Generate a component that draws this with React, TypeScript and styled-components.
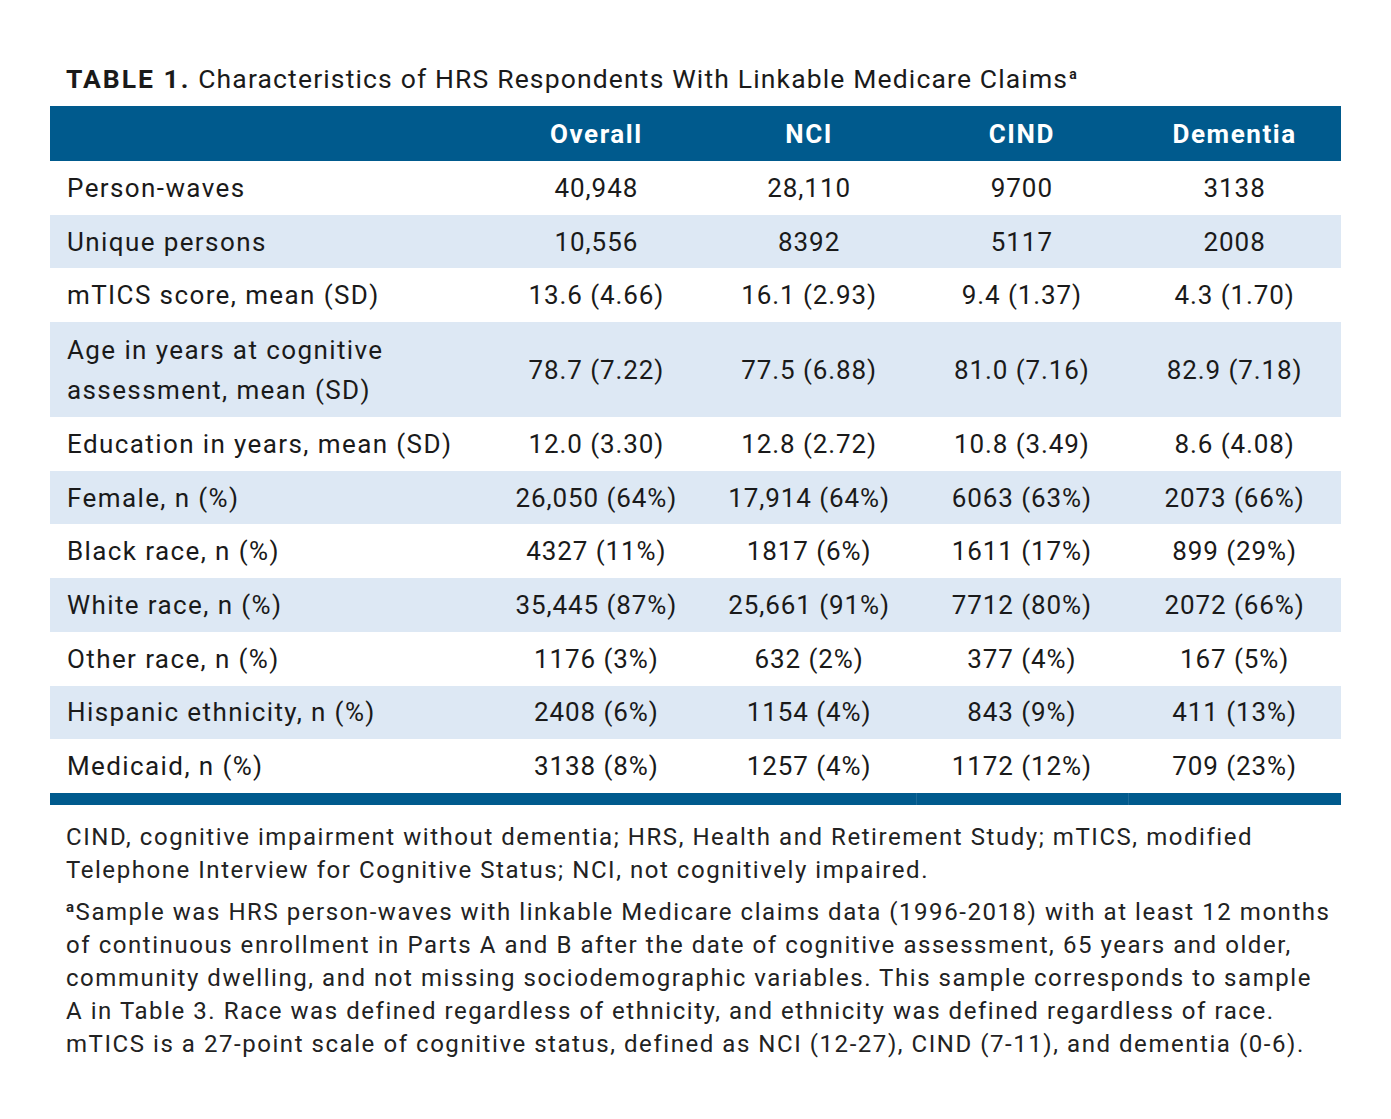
import React from 'react';
import styled, { createGlobalStyle } from 'styled-components';

const GlobalStyle = createGlobalStyle`
  body {
    margin: 0;
    background: #ffffff;
    font-family: 'Roboto', 'Liberation Sans', sans-serif;
    color: #1c1c1c;
  }
`;

const Page = styled.div`
  width: 1391px;
  height: 1119px;
  padding: 62px 50px 0 50px;
  box-sizing: border-box;
`;

const Caption = styled.div`
  font-size: 26.5px;
  letter-spacing: 1.15px;
  line-height: 34px;
  color: #1a1a1a;
  margin-bottom: 10px;
  margin-left: 16px;
  white-space: nowrap;
`;

const CaptionLabel = styled.span`
  font-weight: 700;
  letter-spacing: 2px;
`;

const Sup = styled.sup`
  font-size: 14px;
  font-weight: 700;
  vertical-align: 9px;
  line-height: 0;
  margin-left: 1px;
`;

const Table = styled.div`
  display: grid;
  grid-template-columns: 440px repeat(4, 1fr);
  width: 1291px;
`;

const HeadCell = styled.div<{ $left?: boolean }>`
  background: #005a8d;
  color: #ffffff;
  height: 55px;
  display: flex;
  align-items: center;
  justify-content: ${p => (p.$left ? 'flex-start' : 'center')};
  font-size: 26px;
  font-weight: 700;
  letter-spacing: 1.6px;
`;

const Cell = styled.div<{ $shade: boolean; $left?: boolean; $tall?: boolean }>`
  background: ${p => (p.$shade ? '#dde8f4' : '#ffffff')};
  height: ${p => (p.$tall ? '95px' : '53.7px')};
  display: flex;
  align-items: center;
  justify-content: ${p => (p.$left ? 'flex-start' : 'center')};
  padding-left: ${p => (p.$left ? '17px' : '0')};
  font-size: 26px;
  line-height: 40px;
  letter-spacing: ${p => (p.$left ? '1.4px' : '0.9px')};
  color: #1a1a1a;
  white-space: pre-line;
`;

const BottomBar = styled.div`
  grid-column: 1 / -1;
  display: grid;
  grid-template-columns: 440px repeat(4, 1fr);
  height: 12px;
  background: #005a8d;
`;

const BarSeg = styled.div<{ $sep?: boolean }>`
  border-left: ${p => (p.$sep ? '1px solid #1b6a98' : 'none')};
`;

const Notes = styled.div`
  margin-top: 16px;
  padding-left: 16px;
  font-size: 24px;
  line-height: 33px;
  letter-spacing: 1.55px;
  color: #222222;
`;

const Note = styled.p`
  margin: 0 0 9px 0;
`;

const NoteLine = styled.span`
  display: block;
  white-space: nowrap;
`;

const NoteSup = styled.span`
  font-size: 15px;
  font-weight: 700;
  vertical-align: 8px;
  line-height: 0;
`;

interface Row {
  label: string;
  values: string[];
  tall?: boolean;
}

const rows: Row[] = [
  { label: 'Person-waves', values: ['40,948', '28,110', '9700', '3138'] },
  { label: 'Unique persons', values: ['10,556', '8392', '5117', '2008'] },
  { label: 'mTICS score, mean (SD)', values: ['13.6 (4.66)', '16.1 (2.93)', '9.4 (1.37)', '4.3 (1.70)'] },
  {
    label: 'Age in years at cognitive\nassessment, mean (SD)',
    values: ['78.7 (7.22)', '77.5 (6.88)', '81.0 (7.16)', '82.9 (7.18)'],
    tall: true,
  },
  { label: 'Education in years, mean (SD)', values: ['12.0 (3.30)', '12.8 (2.72)', '10.8 (3.49)', '8.6 (4.08)'] },
  { label: 'Female, n (%)', values: ['26,050 (64%)', '17,914 (64%)', '6063 (63%)', '2073 (66%)'] },
  { label: 'Black race, n (%)', values: ['4327 (11%)', '1817 (6%)', '1611 (17%)', '899 (29%)'] },
  { label: 'White race, n (%)', values: ['35,445 (87%)', '25,661 (91%)', '7712 (80%)', '2072 (66%)'] },
  { label: 'Other race, n (%)', values: ['1176 (3%)', '632 (2%)', '377 (4%)', '167 (5%)'] },
  { label: 'Hispanic ethnicity, n (%)', values: ['2408 (6%)', '1154 (4%)', '843 (9%)', '411 (13%)'] },
  { label: 'Medicaid, n (%)', values: ['3138 (8%)', '1257 (4%)', '1172 (12%)', '709 (23%)'] },
];

const headers = ['Overall', 'NCI', 'CIND', 'Dementia'];

const App: React.FC = () => {
  return (
    <>
      <GlobalStyle />
      <Page>
        <Caption>
          <CaptionLabel>TABLE 1.</CaptionLabel> Characteristics of HRS Respondents With Linkable Medicare Claims
          <Sup>a</Sup>
        </Caption>
        <Table>
          <HeadCell $left />
          {headers.map(h => (
            <HeadCell key={h}>{h}</HeadCell>
          ))}
          {rows.map((row, i) => (
            <React.Fragment key={row.label}>
              <Cell $shade={i % 2 === 1} $left $tall={row.tall}>
                {row.label}
              </Cell>
              {row.values.map((v, j) => (
                <Cell key={j} $shade={i % 2 === 1} $tall={row.tall}>
                  {v}
                </Cell>
              ))}
            </React.Fragment>
          ))}
          <BottomBar>
            <BarSeg />
            <BarSeg />
            <BarSeg />
            <BarSeg $sep />
            <BarSeg $sep />
          </BottomBar>
        </Table>
        <Notes>
          <Note>
            <NoteLine>CIND, cognitive impairment without dementia; HRS, Health and Retirement Study; mTICS, modified</NoteLine>
            <NoteLine>Telephone Interview for Cognitive Status; NCI, not cognitively impaired.</NoteLine>
          </Note>
          <Note>
            <NoteLine>
              <NoteSup>a</NoteSup>Sample was HRS person-waves with linkable Medicare claims data (1996-2018) with at least 12 months
            </NoteLine>
            <NoteLine>of continuous enrollment in Parts A and B after the date of cognitive assessment, 65 years and older,</NoteLine>
            <NoteLine>community dwelling, and not missing sociodemographic variables. This sample corresponds to sample</NoteLine>
            <NoteLine>A in Table 3. Race was defined regardless of ethnicity, and ethnicity was defined regardless of race.</NoteLine>
            <NoteLine>mTICS is a 27-point scale of cognitive status, defined as NCI (12-27), CIND (7-11), and dementia (0-6).</NoteLine>
          </Note>
        </Notes>
      </Page>
    </>
  );
};

export default App;
